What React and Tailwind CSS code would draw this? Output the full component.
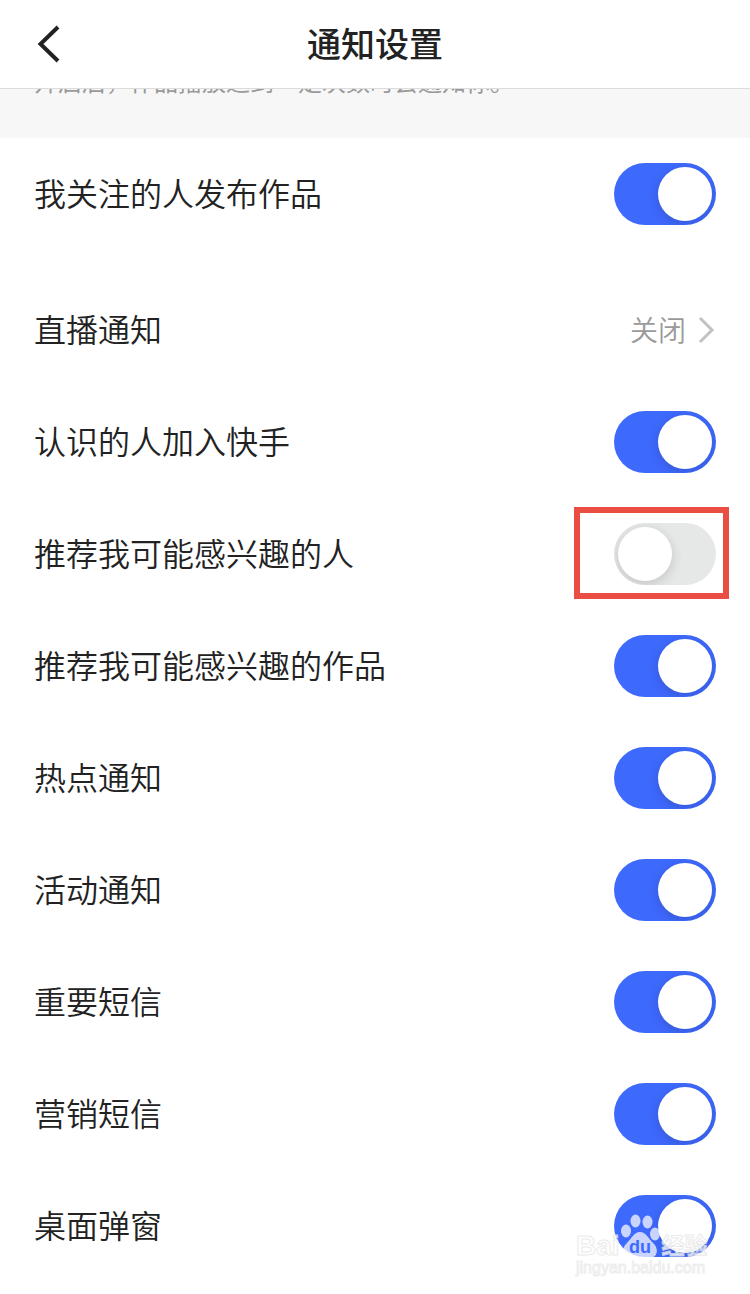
import { useState } from 'react';

const SETTINGS = [
  { id: 'live', label: '直播通知', value: '关闭' },
  { id: 'friend-join', label: '认识的人加入快手', on: true },
  { id: 'suggest-people', label: '推荐我可能感兴趣的人', on: false, highlighted: true },
  { id: 'suggest-works', label: '推荐我可能感兴趣的作品', on: true },
  { id: 'hot', label: '热点通知', on: true },
  { id: 'activity', label: '活动通知', on: true },
  { id: 'sms', label: '重要短信', on: true },
  { id: 'marketing', label: '营销短信', on: true },
  { id: 'desktop', label: '桌面弹窗', on: true },
];

const Header = () => (
  <header className="relative z-10 flex h-[89px] items-center justify-center border-b border-[#dcdcdc] bg-white">
    <button type="button" aria-label="返回" className="absolute left-8 flex h-12 w-8 items-center justify-center">
      <svg viewBox="0 0 32 48" className="h-12 w-8 fill-none stroke-[#222222]" strokeWidth="4">
        <path d="M26 7 L8.5 24 L26 41" />
      </svg>
    </button>
    <h1 className="pb-0.5 text-[34px] leading-9 font-medium text-[#222222]">通知设置</h1>
  </header>
);

const Switch = ({ id, defaultOn }) => {
  const [on, setOn] = useState(defaultOn);

  return (
    <span className="relative flex shrink-0">
      <input
        id={id}
        type="checkbox"
        role="switch"
        checked={on}
        onChange={(e) => setOn(e.target.checked)}
        className="peer h-[62px] w-[102px] cursor-pointer appearance-none rounded-full bg-[#e6e8e8] checked:bg-[#3e69fd]"
      />
      {/* the clip keeps the knob's shadow inside the track */}
      <span className="pointer-events-none absolute inset-0 flex items-center overflow-hidden rounded-full px-1 peer-checked:justify-end">
        <span className="h-[54px] w-[54px] rounded-full bg-white shadow-[0_3px_12px_rgba(0,0,0,0.16)]" />
      </span>
    </span>
  );
};

const SwitchRow = ({ id, label, on, highlighted }) => (
  <li className="relative flex h-28 items-center justify-between px-[34px]">
    <label htmlFor={id} className="pb-1 text-[32px] font-[350] text-[#222222]">{label}</label>
    <Switch id={id} defaultOn={on} />
    {highlighted && (
      <span className="pointer-events-none absolute top-[9px] right-[21px] h-[92px] w-[155px] border-6 border-[#ea4d42]" />
    )}
  </li>
);

const LinkRow = ({ id, label, value }) => (
  <li>
    <a href={`#${id}`} className="flex h-28 items-center justify-between px-[34px]">
      <span className="pb-1 text-[32px] font-[350] text-[#222222]">{label}</span>
      <span className="flex items-center gap-3 text-[28px] font-[350] text-[#9a9a9a]">
        <span className="pb-0.5">{value}</span>
        <svg viewBox="0 0 18 28" className="h-7 w-[18px] fill-none stroke-[#c2c2c2]" strokeWidth="3">
          <path d="M2 2 L14 14 L2 26" />
        </svg>
      </span>
    </a>
  </li>
);

const Watermark = () => (
  <div className="pointer-events-none absolute right-[38px] bottom-4 w-[136px] font-['Liberation_Sans','Noto_Sans_CJK_SC',sans-serif] opacity-80">
    <div className="flex h-11 items-end text-[28px] leading-6 font-bold text-white [-webkit-text-stroke:1px_#e6e6e6]">
      <span>Bai</span>
      <svg viewBox="0 0 40 44" className="h-11 w-10 shrink-0 [-webkit-text-stroke:0]">
        <g fill="#ffffff" fillOpacity="0.9">
          <ellipse cx="6" cy="17" rx="5" ry="6.5" />
          <ellipse cx="15.5" cy="7" rx="5" ry="6.5" />
          <ellipse cx="27.500" cy="8" rx="5" ry="6.5" />
          <ellipse cx="35" cy="20" rx="5" ry="6.5" />
          <path d="M20 18 C26 18 28 24 33 29 C39 34 38 44 30 44 C26 44 23 43 20 43 C17 43 14 44 10 44 C2 44 1 34 7 29 C12 24 14 18 20 18 Z" />
        </g>
        <text x="20" y="39" textAnchor="middle" fontSize="18" fontWeight="700" fill="#3e69fd">du</text>
      </svg>
      <span className="pl-0.5 text-[23px]">经验</span>
    </div>
    <p className="text-[16px] leading-5 text-white [-webkit-text-stroke:1px_#e9e9e9]">jingyan.baidu.com</p>
  </div>
);

export default function App() {
  return (
    <div className="relative min-h-screen overflow-hidden bg-white font-['Noto_Sans_CJK_SC','Liberation_Sans',sans-serif]">
      <Header />
      <main>
        <p className="-mt-[26px] bg-[#f7f7f7] px-[34px] pb-[39px] text-[24px] leading-9 text-[#9a9a9a]">
          开启后，作品播放达到一定次数时会通知你。
        </p>
        <ul>
          <SwitchRow id="following" label="我关注的人发布作品" on />
        </ul>
        <ul className="mt-6 mb-3">
          {SETTINGS.map((item) => (
            item.value ? <LinkRow key={item.id} {...item} /> : <SwitchRow key={item.id} {...item} />
          ))}
        </ul>
      </main>
      <Watermark />
    </div>
  );
}
